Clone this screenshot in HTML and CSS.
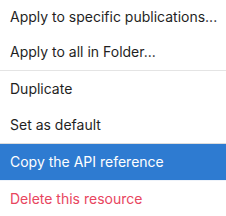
FILE: index.html
```html
<!DOCTYPE html>
<html lang="en">
<head>
    <meta charset="UTF-8">
    <title>Menu</title>
    <link rel="stylesheet" href="styles.css">
</head>
<body>
    <div class="menu">
        <div class="menu-item">Apply to specific publications...</div>
        <div class="menu-item">Apply to all in Folder...</div>
        <div class="divider"></div>
        <div class="menu-item">Duplicate</div>
        <div class="menu-item">Set as default</div>
        <div class="menu-item active">Copy the API reference</div>
        <div class="menu-item danger">Delete this resource</div>
    </div>
</body>
</html>
```
FILE: styles.css
```css
body {
    margin: 0;
    background-color: white;
    font-family: Inter, 'Liberation Sans', sans-serif;
}
.menu {
    width: 226px;
    background-color: white;
}
.menu-item {
    height: 36px;
    line-height: 36px;
    padding: 0 10px;
    font-size: 14px;
    color: #1f1f1f;
    white-space: nowrap;
}
.menu-item:first-child {
    height: 34px;
    line-height: 34px;
}
.divider {
    height: 1px;
    background-color: #e4e4e4;
}
.active {
    background-color: #2e7bd1;
    color: white;
    border-top: 1px solid #dcdcdc;
    border-bottom: 1px solid #eef3fa;
}
.danger {
    color: #e8455e;
}
```
